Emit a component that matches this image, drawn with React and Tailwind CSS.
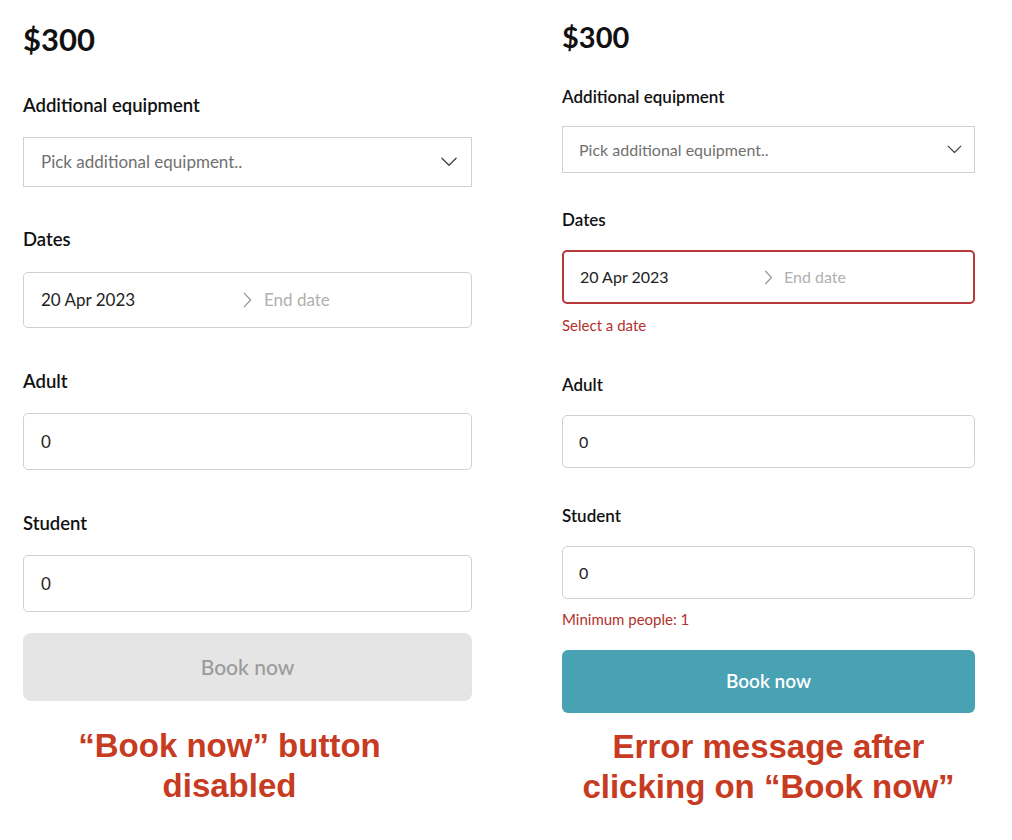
import React from "react";

const font = { fontFamily: "Lato, 'Noto Sans', sans-serif" };

function ChevronDown({ className }) {
  return (
    <svg viewBox="0 0 20 12" className={className} fill="none" stroke="currentColor" strokeWidth="1.6" strokeLinecap="round" strokeLinejoin="round">
      <path d="M1.5 1.5 L10 10 L18.5 1.5" />
    </svg>
  );
}

function ChevronRight({ className }) {
  return (
    <svg viewBox="0 0 10 18" className={className} fill="none" stroke="currentColor" strokeWidth="1.5" strokeLinecap="round" strokeLinejoin="round">
      <path d="M1.5 1.5 L8.5 9 L1.5 16.5" />
    </svg>
  );
}

function LeftPanel() {
  return (
    <div className="flex w-[449px] flex-col pt-[22px]">
      <div className="text-[31px] font-bold leading-[34px] text-[#111]">$300</div>
      <div className="mt-[37px] text-[18.5px] font-semibold leading-[24px] text-[#111]">Additional equipment</div>
      <div className="mt-[20px] flex h-[50px] items-center justify-between border border-[#d0d0d0] pl-[17px] pr-[13px]">
        <span className="text-[17px] text-[#707070]">Pick additional equipment..</span>
        <ChevronDown className="h-[10px] w-[18px] text-[#444]" />
      </div>
      <div className="mt-[40px] text-[18.5px] font-semibold leading-[24px] text-[#111]">Dates</div>
      <div className="mt-[21px] flex h-[56px] items-center rounded-[5px] border border-[#d0d0d0] pl-[17px]">
        <span className="w-[202px] text-[17px] text-[#222]">20 Apr 2023</span>
        <ChevronRight className="h-[16px] w-[9px] text-[#999]" />
        <span className="ml-[12px] text-[17px] text-[#b0b0b0]">End date</span>
      </div>
      <div className="mt-[41px] text-[18.5px] font-semibold leading-[24px] text-[#111]">Adult</div>
      <div className="mt-[20px] flex h-[57px] items-center rounded-[5px] border border-[#d0d0d0] pl-[17px] text-[17px] text-[#222]">0</div>
      <div className="mt-[41px] text-[18.5px] font-semibold leading-[24px] text-[#111]">Student</div>
      <div className="mt-[20px] flex h-[57px] items-center rounded-[5px] border border-[#d0d0d0] pl-[17px] text-[17px] text-[#222]">0</div>
      <div className="mt-[21px] flex h-[68px] items-center justify-center rounded-[8px] bg-[#e5e5e5] text-[21px] font-medium text-[#9a9a9a]">Book now</div>
      <div
        className="mt-[25px] pr-[36px] text-center text-[33px] font-bold leading-[40px] text-[#c73b22]"
        style={{ fontFamily: "'Liberation Sans', Arial, sans-serif" }}
      >
        <div>“Book now” button</div>
        <div>disabled</div>
      </div>
    </div>
  );
}

function RightPanel() {
  return (
    <div className="flex w-[413px] flex-col pt-[21px]">
      <div className="text-[29px] font-bold leading-[32px] text-[#111]">$300</div>
      <div className="mt-[33px] text-[17px] font-semibold leading-[22px] text-[#111]">Additional equipment</div>
      <div className="mt-[18px] flex h-[47px] items-center justify-between border border-[#d0d0d0] pl-[16px] pr-[11px]">
        <span className="text-[16px] text-[#707070]">Pick additional equipment..</span>
        <ChevronDown className="h-[9px] w-[17px] text-[#444]" />
      </div>
      <div className="mt-[36px] text-[17px] font-semibold leading-[22px] text-[#111]">Dates</div>
      <div className="mt-[19px] flex h-[54px] items-center rounded-[5px] border-2 border-[#b5393a] pl-[16px]">
        <span className="w-[184px] text-[16px] text-[#222]">20 Apr 2023</span>
        <ChevronRight className="h-[15px] w-[9px] text-[#999]" />
        <span className="ml-[11px] text-[16px] text-[#b0b0b0]">End date</span>
      </div>
      <div className="mt-[11px] text-[15px] leading-[20px] text-[#b3312c]">Select a date</div>
      <div className="mt-[39px] text-[17px] font-semibold leading-[22px] text-[#111]">Adult</div>
      <div className="mt-[19px] flex h-[53px] items-center rounded-[5px] border border-[#d0d0d0] pl-[16px] text-[16px] text-[#222]">0</div>
      <div className="mt-[37px] text-[17px] font-semibold leading-[22px] text-[#111]">Student</div>
      <div className="mt-[19px] flex h-[53px] items-center rounded-[5px] border border-[#d0d0d0] pl-[16px] text-[16px] text-[#222]">0</div>
      <div className="mt-[10px] text-[15px] leading-[20px] text-[#b3312c]">Minimum people: 1</div>
      <div className="mt-[21px] flex h-[63px] items-center justify-center rounded-[6px] bg-[#49a1b4] text-[19px] font-semibold text-white">Book now</div>
      <div
        className="mt-[14px] text-center text-[33px] font-bold leading-[40px] text-[#c73b22]"
        style={{ fontFamily: "'Liberation Sans', Arial, sans-serif" }}
      >
        <div>Error message after</div>
        <div>clicking on “Book now”</div>
      </div>
    </div>
  );
}

export default function App() {
  return (
    <div className="h-[840px] w-[1012px] bg-white" style={font}>
      <div className="flex gap-[90px] pl-[23px]">
        <LeftPanel />
        <RightPanel />
      </div>
    </div>
  );
}
